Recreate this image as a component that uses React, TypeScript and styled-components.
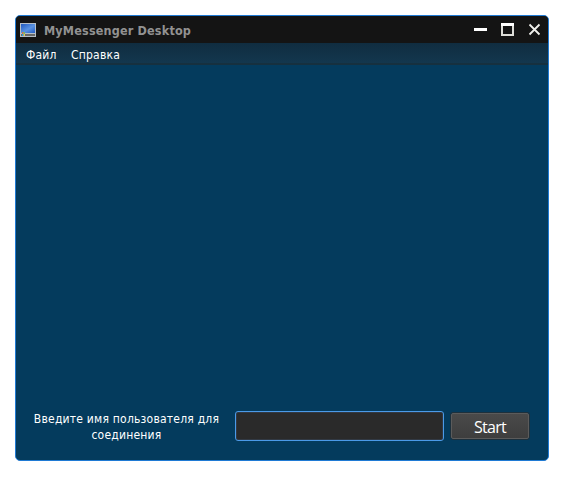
import React from "react";
import styled, { createGlobalStyle } from "styled-components";

const GlobalStyle = createGlobalStyle`
  * { box-sizing: border-box; }
  body { margin: 0; background: #fff; overflow: hidden; }
`;

const Page = styled.div`
  width: 573px;
  height: 484px;
  padding: 15px;
  background: #fff;
`;

const Window = styled.main`
  display: flex;
  flex-direction: column;
  width: 534px;
  height: 446px;
  border: 1px solid #1f7ad4;
  border-radius: 5px;
  overflow: hidden;
  background: #043b5d;
  color: #fff;
  font-family: "DejaVu Sans Condensed", "DejaVu Sans", sans-serif;
  font-stretch: condensed;
  font-size: 12px;
  letter-spacing: 0.22px;
`;

const TitleBar = styled.header`
  display: flex;
  align-items: center;
  flex: 0 0 27px;
  height: 27px;
  padding: 0 7px 0 4px;
  background: #141414;
`;

const Title = styled.h1`
  flex: 1;
  margin: 2px 0 0 8px;
  color: #929292;
  font-size: 12.5px;
  line-height: 16px;
  font-weight: 700;
  letter-spacing: 0.17px;
  white-space: nowrap;
`;

const Controls = styled.div`
  display: flex;
  gap: 14px;
`;

const ControlButton = styled.button`
  display: flex;
  width: 13px;
  height: 14px;
  padding: 0;
  border: 0;
  background: transparent;
`;

const MenuBar = styled.nav`
  display: flex;
  flex: 0 0 22px;
  gap: 14px;
  padding: 4px 10px 0;
  background: linear-gradient(#102d40, #13374e 20px, #16303f 20px);
`;

const MenuItem = styled.span<{ $width: number }>`
  width: ${(p) => p.$width}px;
  line-height: 17px;
  white-space: nowrap;
`;

const Content = styled.section`
  flex: 1;
  background: #043b5d;
`;

const ConnectForm = styled.form`
  display: flex;
  align-items: flex-start;
  flex: 0 0 49px;
  height: 49px;
  padding-left: 15px;
`;

const Prompt = styled.label`
  width: 191px;
  text-align: center;
  line-height: 16px;
  white-space: nowrap;
`;

const NameInput = styled.input`
  width: 209px;
  height: 30px;
  margin: 0 7px 0 13px;
  padding: 0 6px;
  border: 1px solid #4b9ae8;
  border-radius: 3px;
  outline: none;
  background: #2a2a2a;
  box-shadow: inset 0 0 0 1px #323943;
  color: #fff;
`;

const StartButton = styled.button`
  width: 78px;
  height: 26px;
  margin-top: 2px;
  padding: 1px 0 0;
  border: 1px solid #5b5b5b;
  border-radius: 2px;
  background: linear-gradient(#4a4a4a, #3e3e3e);
  box-shadow: 0 0 0 1px #1d303c;
  color: #fff;
  font-family: "Open Sans", sans-serif;
  font-size: 16px;
  line-height: 22px;
  letter-spacing: -0.7px;
`;

function MonitorIcon() {
  return (
    <svg width="16" height="14" viewBox="0 0 16 14">
      <defs>
        <linearGradient id="screen" x2="1" y2="1">
          <stop stopColor="#2158bd" />
          <stop offset=".55" stopColor="#5b93e2" />
          <stop offset="1" stopColor="#215ac2" />
        </linearGradient>
      </defs>
      <path d="M0 0h16v14H0z" fill="#b6bfc7" />
      <path d="M1 1h14v9H1z" fill="url(#screen)" />
      <path d="M1 11h14v2H1z" fill="#686968" />
      <path d="M2 9h1.5v2H2z" fill="#d66b4d" />
      <path d="M3.5 9H5v2H3.5z" fill="#7bb95a" />
      <path d="M2 11h1.5v2H2z" fill="#229ee8" />
      <path d="M3.5 11H5v2H3.5z" fill="#e7c558" />
    </svg>
  );
}

export default function App() {
  return (
    <>
      <GlobalStyle />
      <Page>
        <Window>
          <TitleBar>
            <MonitorIcon />
            <Title>MyMessenger Desktop</Title>
            <Controls>
              <ControlButton aria-label="Minimize">
                <svg width="13" height="14"><path d="M0 5h13v3H0z" fill="#fff" /></svg>
              </ControlButton>
              <ControlButton aria-label="Maximize">
                <svg width="13" height="14">
                  <path d="M1 1v11h11V1" fill="none" stroke="#deded9" strokeWidth="2" />
                  <path d="M0 0h13v3H0z" fill="#fff" />
                </svg>
              </ControlButton>
              <ControlButton aria-label="Close">
                <svg width="13" height="14">
                  <path d="M1.5 1.5l10 10M11.5 1.5l-10 10" fill="none" stroke="#f0f0ec" strokeWidth="1.8" />
                </svg>
              </ControlButton>
            </Controls>
          </TitleBar>
          <MenuBar>
            <MenuItem $width={31}>Файл</MenuItem>
            <MenuItem $width={50}>Справка</MenuItem>
          </MenuBar>
          <Content />
          <ConnectForm onSubmit={(e) => e.preventDefault()}>
            <Prompt htmlFor="username">
              Введите имя пользователя для<br />соединения
            </Prompt>
            <NameInput id="username" />
            <StartButton type="submit">Start</StartButton>
          </ConnectForm>
        </Window>
      </Page>
    </>
  );
}
